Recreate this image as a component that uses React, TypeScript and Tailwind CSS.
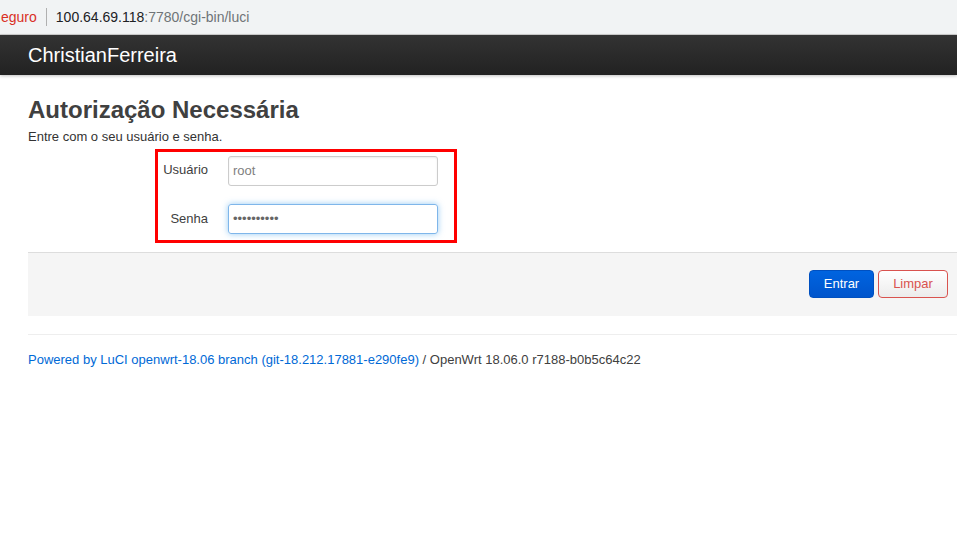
import React from 'react';

const App: React.FC = () => {
  return (
    <div className="w-[957px] h-[540px] overflow-hidden bg-white font-['Liberation_Sans',Arial,sans-serif] text-[#404040]">
      {/* Browser address bar */}
      <div className="h-[35px] bg-[#f1f3f4] flex items-center text-[14px] border-b border-[#d0d0d0]">
        <span className="text-[#d93025] ml-[1px]">eguro</span>
        <span className="mx-[9px] h-[18px] w-px bg-[#b0b0b0]" />
        <span className="text-[#202124]">100.64.69.118</span>
        <span className="text-[#6f7377]">:7780/cgi-bin/luci</span>
      </div>

      {/* LuCI header */}
      <div className="h-[40px] bg-gradient-to-b from-[#333333] to-[#222222] flex items-center px-[28px] shadow-[0_1px_3px_rgba(0,0,0,0.25)]">
        <span className="text-white text-[20px] leading-none">ChristianFerreira</span>
      </div>

      <div className="pl-[28px] pt-[21px]">
        <h2 className="text-[24px] font-bold leading-[28px] text-[#404040]">Autorização Necessária</h2>
        <p className="text-[13px] leading-[16px] mt-[5px] text-[#333]">Entre com o seu usuário e senha.</p>

        {/* Form fields with red highlight */}
        <div className="ml-[127px] mt-[4px] w-[302px] h-[94px] border-[3px] border-[#ff0000] relative">
          <div className="absolute left-[4px] top-[4px] flex flex-col gap-[18px]">
            <div className="flex items-center">
              <label className="w-[46px] text-right text-[13px] text-[#404040] -mt-[3px]">Usuário</label>
              <div className="ml-[20px] w-[210px] h-[30px] border border-[#cccccc] rounded-[3px] flex items-center px-[4px] text-[13px] text-[#808080] shadow-[inset_0_1px_2px_rgba(0,0,0,0.08)]">
                root
              </div>
            </div>
            <div className="flex items-center">
              <label className="w-[46px] text-right text-[13px] text-[#404040]">Senha</label>
              <div className="ml-[20px] w-[210px] h-[30px] border border-[#7fb6ea] rounded-[3px] flex items-center px-[4px] text-[13px] text-[#666] shadow-[0_0_6px_rgba(82,168,236,0.6)]">
                ••••••••••
              </div>
            </div>
          </div>
        </div>

        {/* Actions bar */}
        <div className="mt-[9px] h-[64px] bg-[#f5f5f5] border-t border-[#dddddd] flex items-center justify-end pr-[9px] gap-[4px] pb-[2px]">
          <button className="w-[65px] h-[28px] rounded-[4px] bg-gradient-to-b from-[#0064e0] to-[#0055cc] border border-[#0050c0] text-white text-[13px]">
            Entrar
          </button>
          <button className="w-[70px] h-[28px] rounded-[4px] bg-gradient-to-b from-white to-[#ececec] border border-[#d9534f] text-[#d9534f] text-[13px]">
            Limpar
          </button>
        </div>

        <div className="mt-[18px] border-t border-[#eeeeee]" />

        <p className="mt-[17px] text-[13px] leading-[16px] text-[#404040]">
          <span className="text-[#0069d6]">Powered by LuCI openwrt-18.06 branch (git-18.212.17881-e290fe9)</span> / OpenWrt 18.06.0 r7188-b0b5c64c22
        </p>
      </div>
    </div>
  );
};

export default App;
